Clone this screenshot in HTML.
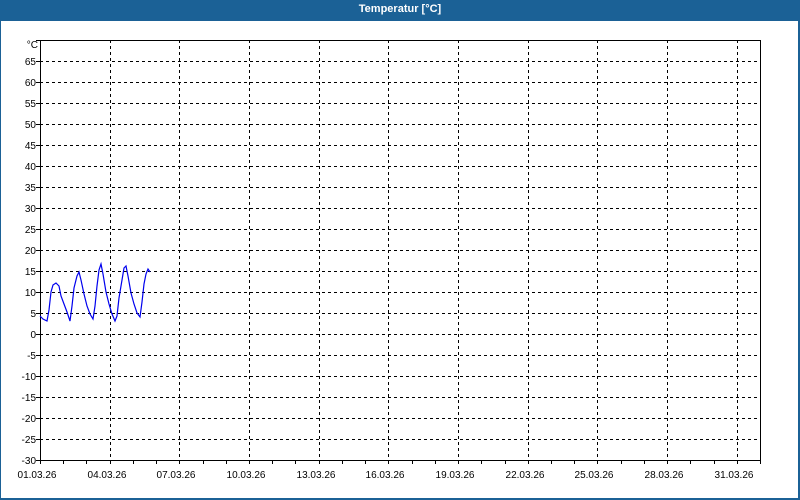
<!DOCTYPE html>
<html><head><meta charset="utf-8"><style>
html,body{margin:0;padding:0;background:#fff}
body{width:800px;height:500px;position:relative;overflow:hidden;font-family:"Liberation Sans","DejaVu Sans",sans-serif}
.bar{position:absolute;left:0;top:0;width:800px;height:21px;background:#1b6196;color:#fff;font-size:11px;font-weight:bold;text-align:center;line-height:19px}
.frame{position:absolute;left:0;top:21px;height:477px;border-left:1px solid #1b6196;border-right:2px solid #1b6196;border-bottom:2px solid #1b6196;box-sizing:content-box;width:797px}
svg{position:absolute;left:0;top:0}
</style></head><body>
<div class="bar">Temperatur [°C]</div>
<div class="frame"></div>
<svg width="800" height="500" font-family="Liberation Sans, DejaVu Sans, sans-serif" font-size="10">
<g stroke="#000" stroke-width="1" stroke-dasharray="3,3" shape-rendering="crispEdges">
<line x1="40" x2="760" y1="61.5" y2="61.5"/><line x1="40" x2="760" y1="82.5" y2="82.5"/><line x1="40" x2="760" y1="103.5" y2="103.5"/><line x1="40" x2="760" y1="124.5" y2="124.5"/><line x1="40" x2="760" y1="145.5" y2="145.5"/><line x1="40" x2="760" y1="166.5" y2="166.5"/><line x1="40" x2="760" y1="187.5" y2="187.5"/><line x1="40" x2="760" y1="208.5" y2="208.5"/><line x1="40" x2="760" y1="229.5" y2="229.5"/><line x1="40" x2="760" y1="250.5" y2="250.5"/><line x1="40" x2="760" y1="271.5" y2="271.5"/><line x1="40" x2="760" y1="292.5" y2="292.5"/><line x1="40" x2="760" y1="313.5" y2="313.5"/><line x1="40" x2="760" y1="334.5" y2="334.5"/><line x1="40" x2="760" y1="355.5" y2="355.5"/><line x1="40" x2="760" y1="376.5" y2="376.5"/><line x1="40" x2="760" y1="397.5" y2="397.5"/><line x1="40" x2="760" y1="418.5" y2="418.5"/><line x1="40" x2="760" y1="439.5" y2="439.5"/>
<line x1="110.5" x2="110.5" y1="40" y2="460"/><line x1="179.5" x2="179.5" y1="40" y2="460"/><line x1="249.5" x2="249.5" y1="40" y2="460"/><line x1="319.5" x2="319.5" y1="40" y2="460"/><line x1="388.5" x2="388.5" y1="40" y2="460"/><line x1="458.5" x2="458.5" y1="40" y2="460"/><line x1="528.5" x2="528.5" y1="40" y2="460"/><line x1="597.5" x2="597.5" y1="40" y2="460"/><line x1="667.5" x2="667.5" y1="40" y2="460"/><line x1="737.5" x2="737.5" y1="40" y2="460"/>
</g>
<rect x="40.5" y="40.5" width="720" height="420" fill="none" stroke="#000" shape-rendering="crispEdges"/>
<g id="ticks" stroke="#000" shape-rendering="crispEdges"></g>
<polyline fill="none" stroke="#0000ee" stroke-width="1.2" points="40,316 43,319 47,321 49,310 51,292 53,285 56,283 59,286 61,296 64,304 67,312 70,321 72,306 74,288 77,276 79,272 81,280 84,294 87,306 90,314 93,319 95,306 97,286 99,270 101,264 103,274 106,292 109,304 112,314 115,321 117,316 119,298 122,280 124,268 126,266 128,276 131,293 134,304 137,313 140,317 142,302 144,284 146,274 148,269 150,272"/>
<g text-anchor="end" fill="#000">
<text x="38" y="48">°C</text>
<text x="36" y="65">65</text><text x="36" y="86">60</text><text x="36" y="107">55</text><text x="36" y="128">50</text><text x="36" y="149">45</text><text x="36" y="170">40</text><text x="36" y="191">35</text><text x="36" y="212">30</text><text x="36" y="233">25</text><text x="36" y="254">20</text><text x="36" y="275">15</text><text x="36" y="296">10</text><text x="36" y="317">5</text><text x="36" y="338">0</text><text x="36" y="359">-5</text><text x="36" y="380">-10</text><text x="36" y="401">-15</text><text x="36" y="422">-20</text><text x="36" y="443">-25</text><text x="36" y="464">-30</text>
</g>
<g text-anchor="middle" fill="#000">
<text x="37" y="478">01.03.26</text><text x="107" y="478">04.03.26</text><text x="176" y="478">07.03.26</text><text x="246" y="478">10.03.26</text><text x="316" y="478">13.03.26</text><text x="385" y="478">16.03.26</text><text x="455" y="478">19.03.26</text><text x="525" y="478">22.03.26</text><text x="594" y="478">25.03.26</text><text x="664" y="478">28.03.26</text><text x="734" y="478">31.03.26</text>
</g>
</svg>
<script>
var g=document.getElementById('ticks'),s='';
for(var i=0;i<=31;i++){var x=Math.round(40+i*720/31)+.5;s+='<line x1="'+x+'" x2="'+x+'" y1="460" y2="464"/>';}
for(var j=0;j<=20;j++){var y=40+j*21+.5;s+='<line x1="36" x2="40" y1="'+y+'" y2="'+y+'"/>';}
g.innerHTML=s;
</script>
</body></html>
